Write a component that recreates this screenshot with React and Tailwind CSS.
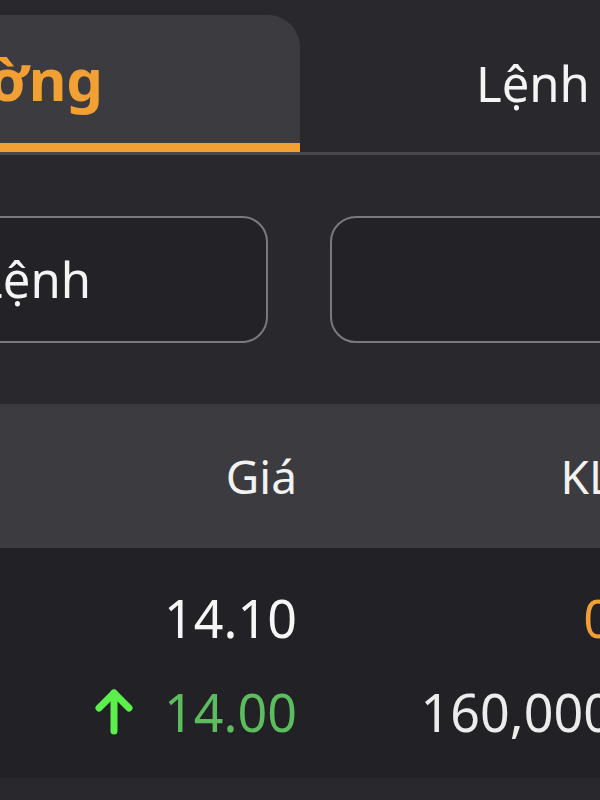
export default function App() {
  return (
    <div className="w-[600px] h-[800px] overflow-hidden bg-[#29282d] font-['Noto_Sans',sans-serif]">
      {/* Tabs */}
      <div className="pt-[15px]">
        <div className="flex w-[1000px] -ml-[200px] border-b-[3px] border-[#48474c]">
          <div className="w-[500px] h-[137px] rounded-t-[32px] bg-[#3c3c40] border-b-[9px] border-[#f2a033] flex justify-end items-start pr-[197px] pt-[35px]">
            <span className="text-[58px] font-bold leading-none text-[#f2a033] whitespace-nowrap">
              Thường
            </span>
          </div>
          <div className="w-[500px] pl-[176px] pt-[44px]">
            <span className="text-[49px] leading-none text-[#f4f4f4] whitespace-nowrap">
              Lệnh điều kiện
            </span>
          </div>
        </div>
      </div>

      {/* Buttons */}
      <div className="mt-[61px] flex -ml-[200px] w-[1100px] gap-[62px]">
        <div className="w-[468px] h-[127px] rounded-[26px] border-2 border-[#7a797f] bg-[#232226] flex items-center justify-end pr-[175px]">
          <span className="text-[49px] leading-none text-[#f4f4f4] whitespace-nowrap">Đặt Lệnh</span>
        </div>
        <div className="w-[500px] h-[127px] rounded-[26px] border-2 border-[#7a797f] bg-[#232226]"></div>
      </div>

      {/* Table header */}
      <div className="mt-[61px] h-[144px] bg-[#3c3c40] flex items-center w-[613px]">
        <div className="w-[297px] shrink-0 text-right text-[46px] leading-none text-[#f2f2f2]">Giá</div>
        <div className="w-[316px] shrink-0 text-right text-[46px] leading-none text-[#f2f2f2] whitespace-nowrap">KL</div>
      </div>

      {/* Rows */}
      <div className="bg-[#222125] pt-[23px] pb-[19px] w-[613px]">
        <div className="h-[94px] flex items-center">
          <div className="w-[297px] shrink-0 text-right text-[52px] leading-none text-[#f6f6f6]">14.10</div>
          <div className="w-[316px] shrink-0 text-right text-[52px] leading-none text-[#f2a033]">0</div>
        </div>
        <div className="h-[94px] flex items-center">
          <div className="w-[297px] shrink-0 flex items-center justify-end gap-[31px]">
            <svg width="38" height="46" viewBox="0 0 38 46" fill="none" stroke="#5cf04c" strokeWidth="7" strokeLinecap="round" strokeLinejoin="round">
              <path d="M4 19 L19 4 L34 19" />
              <path d="M19 4 V42" />
            </svg>
            <span className="text-[52px] leading-none text-[#5cbd5f]">14.00</span>
          </div>
          <div className="w-[316px] shrink-0 text-right text-[52px] leading-none text-[#ececec] whitespace-nowrap">160,000</div>
        </div>
      </div>
    </div>
  );
}
